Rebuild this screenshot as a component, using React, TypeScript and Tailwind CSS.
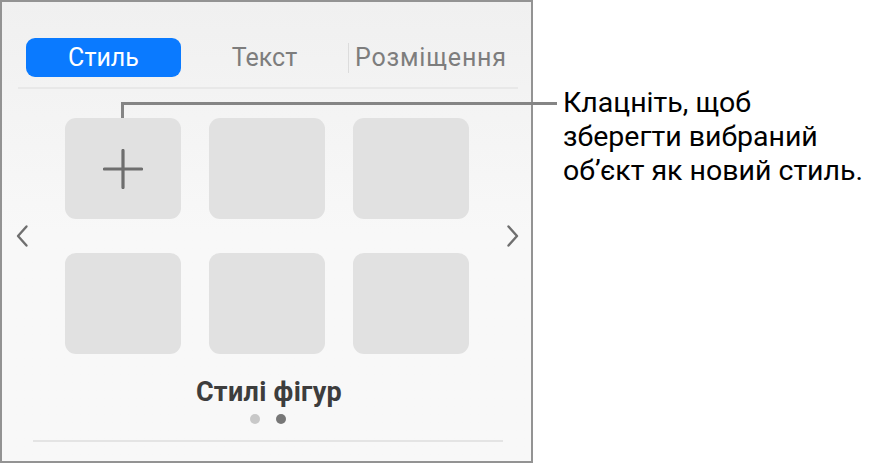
import React from "react";

const font = { fontFamily: "Roboto, 'Noto Sans', 'Liberation Sans', sans-serif" };

function ChevronLeft() {
  return (
    <svg width="14" height="24" viewBox="0 0 14 24" fill="none">
      <path d="M11.5 2.5 L3 12 L11.5 21.5" stroke="#6f6f6f" strokeWidth="2.4" strokeLinecap="round" strokeLinejoin="round" />
    </svg>
  );
}

function ChevronRight() {
  return (
    <svg width="14" height="24" viewBox="0 0 14 24" fill="none">
      <path d="M2.5 2.5 L11 12 L2.5 21.5" stroke="#6f6f6f" strokeWidth="2.4" strokeLinecap="round" strokeLinejoin="round" />
    </svg>
  );
}

function PlusIcon() {
  return (
    <svg width="40" height="40" viewBox="0 0 40 40" fill="none">
      <path d="M20 1.5 V38.5 M1.5 20 H38.5" stroke="#6e6e6e" strokeWidth="3.2" strokeLinecap="round" />
    </svg>
  );
}

function Tile({ children }: { children?: React.ReactNode }) {
  return (
    <div className="w-[116px] h-[101px] rounded-[11px] bg-[#e1e1e1] flex items-center justify-center">
      {children}
    </div>
  );
}

export default function App() {
  return (
    <div className="relative w-[870px] h-[463px] bg-white flex overflow-hidden" style={font}>
      {/* inspector panel */}
      <div className="w-[533px] h-[463px] shrink-0 border-2 border-[#939393] bg-gradient-to-b from-[#f0f0f0] via-[#f8f8f8] to-[#f8f8f8] flex flex-col">
        {/* segmented tabs */}
        <div className="flex items-center mt-[36px] h-[39px]">
          <div className="ml-[24px] w-[155px] h-[39px] rounded-[9px] bg-[#0a7aff] text-white text-[25px] leading-none flex items-center justify-center">
            Стиль
          </div>
          <div className="w-[167px] text-center text-[25px] leading-none text-[#7d7d7d]">Текст</div>
          <div className="w-px h-[30px] bg-[#dcdcdc]" />
          <div className="ml-[6px] text-[25px] leading-none tracking-[0.8px] text-[#7d7d7d]">Розміщення</div>
        </div>
        <div className="mt-[10px] ml-[16px] w-[500px] h-[2px] bg-[#e8e8e8]" />

        {/* style tiles with paging arrows */}
        <div className="flex items-center mt-[29px]">
          <div className="ml-[13px] w-[14px] flex justify-center">
            <ChevronLeft />
          </div>
          <div className="ml-[36px] grid grid-cols-3 gap-x-[28px] gap-y-[34px]">
            <Tile>
              <PlusIcon />
            </Tile>
            <Tile />
            <Tile />
            <Tile />
            <Tile />
            <Tile />
          </div>
          <div className="ml-[37px] w-[14px] flex justify-center">
            <ChevronRight />
          </div>
        </div>

        <div className="mt-[22px] w-[500px] ml-[17px] text-center text-[27px] tracking-[0.3px] font-bold leading-[32px] text-[#3d3d3d]">
          Стилі фігур
        </div>
        <div className="mt-[6px] flex justify-center gap-[16px] w-[530px] pl-[2px]">
          <div className="w-[10px] h-[10px] rounded-full bg-[#c8c8c8]" />
          <div className="w-[10px] h-[10px] rounded-full bg-[#777777]" />
        </div>
        <div className="mt-[16px] ml-[31px] w-[470px] h-[2px] bg-[#e4e4e4]" />
      </div>

      {/* callout */}
      <div className="pl-[30px] pt-[86px] text-[28.5px] leading-[34px] text-black">
        <div>Клацніть, щоб</div>
        <div>зберегти вибраний</div>
        <div className="whitespace-nowrap">об’єкт як новий стиль.</div>
      </div>

      {/* leader line from the add tile to the callout */}
      <div className="absolute left-[121px] top-[102px] w-[436px] h-[3px] bg-[#858585]" />
      <div className="absolute left-[121px] top-[102px] w-[3px] h-[16px] bg-[#858585]" />
    </div>
  );
}
